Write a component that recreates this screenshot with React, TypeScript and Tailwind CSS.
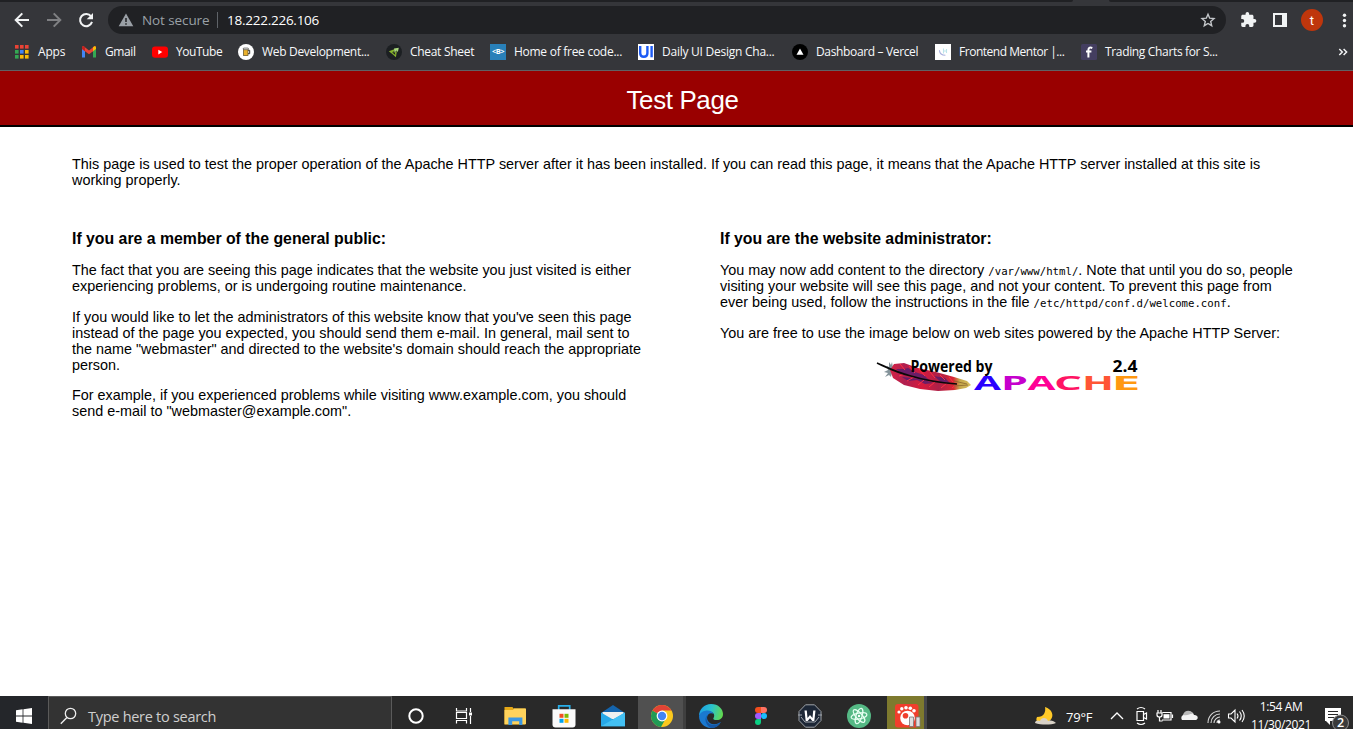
import React from "react";

type IconProps = { children: React.ReactNode; w?: number; h?: number; vb?: string; className?: string };
function Svg({ children, w = 16, h = 16, vb = "0 0 16 16", className = "" }: IconProps) {
  return (
    <svg width={w} height={h} viewBox={vb} fill="none" className={"block shrink-0 " + className}>
      {children}
    </svg>
  );
}

function AppsIcon() {
  const colors = ["#ea4335", "#ea4335", "#ea4335", "#34a853", "#4285f4", "#fbbc05", "#34a853", "#fbbc05", "#fbbc05"];
  return (
    <Svg>
      {colors.map((c, i) => (
        <rect key={i} x={2 + (i % 3) * 5} y={1 + Math.floor(i / 3) * 5} width="3.6" height="3.6" fill={c} />
      ))}
    </Svg>
  );
}

function GmailIcon() {
  return (
    <Svg>
      <path d="M1 4v9.500h3V7z" fill="#4285f4" />
      <path d="M12 7v6.500h3V4z" fill="#34a853" />
      <path d="M1 3.600C1 2.400 2.400 2 3.300 2.700L8 6.400v3.800L1 5z" fill="#ea4335" />
      <path d="M15 3.600c0-1.200-1.400-1.600-2.300-.9L8 6.400v3.800L12 7.200z" fill="#ea4335" />
      <path d="M12 3.300l.7-.6c.9-.7 2.300-.3 2.300.9V5l-3 2.300z" fill="#fbbc04" />
      <path d="M1 3.600c0-1.200 1.400-1.600 2.300-.9l.7.6v4L1 5z" fill="#c5221f" />
    </Svg>
  );
}

function YouTubeIcon() {
  return (
    <Svg>
      <rect x="0" y="2.4" width="16" height="11.300" rx="3" fill="#f00" />
      <path d="M6.300 5.800v4.600l4-2.300z" fill="#fff" />
    </Svg>
  );
}

function BeerIcon() {
  return (
    <Svg>
      <circle cx="8" cy="8" r="8" fill="#fff" />
      <path d="M10 6.300h1.700v3.400H10" stroke="#333" strokeWidth="1" />
      <rect x="5.500" y="4.800" width="4.500" height="6.700" fill="#eab02b" stroke="#5b4a20" strokeWidth="0.7" />
      <rect x="5.200" y="4" width="5.200" height="1.700" rx=".8" fill="#ddd" stroke="#444" strokeWidth=".6" />
    </Svg>
  );
}

function EmmetIcon() {
  return (
    <Svg>
      <circle cx="8" cy="8" r="8" fill="#1c1f22" />
      <path d="M2.800 7.200L9 5 7.800 7.500l-1.300.4 1.600 1 2.800-2-1 6.300-3-2.700z" fill="#86b32d" />
      <path d="M8 4.600l4.800-.9-1 4.500-1-1.600-2.300 2z" fill="#a9d77d" />
      <path d="M6 8.300l3 .8.300 2z" fill="#1c1f22" />
    </Svg>
  );
}

function BootstrapIcon() {
  return (
    <span className="flex h-4 w-4 shrink-0 items-center justify-center bg-[#2980b9] font-['Open_Sans',sans-serif] text-[7.5px] font-bold leading-none tracking-[-0.5px] text-white">
      &lt;B&gt;
    </span>
  );
}

function DailyUiIcon() {
  return (
    <Svg>
      <rect width="16" height="16" fill="#fff" />
      <path d="M2.200 2v7.200c0 4.700 7.200 4.700 7.200 0V2" stroke="#1d5bf5" strokeWidth="2.400" />
      <path d="M13.600 2v11.300" stroke="#1d5bf5" strokeWidth="2.400" />
    </Svg>
  );
}

function VercelIcon() {
  return (
    <Svg>
      <circle cx="8" cy="8" r="8" fill="#000" />
      <path d="M8 4.400l3.500 6.300h-7z" fill="#fff" />
    </Svg>
  );
}

function MentorIcon() {
  return (
    <Svg>
      <rect width="16" height="16" fill="#fff" />
      <path d="M4.400 6.200c.3 3.500 2 5 6 5" stroke="#a9b1de" strokeWidth="1.100" />
      <path d="M8.500 4.500v5M11.500 5v4M9 7h2.500" stroke="#bde5ea" strokeWidth="1.100" />
    </Svg>
  );
}

function ChartsIcon() {
  return (
    <Svg>
      <rect width="16" height="16" rx="1.500" fill="#443e60" />
      <path d="M11.300 4C8.500 2.900 7.400 3.900 7.400 6v7.500M5 7.400h5.400" stroke="#fff" strokeWidth="2" />
    </Svg>
  );
}

const bookmarks = [
  { label: "Apps", icon: <AppsIcon />, box: "w-[68px] gap-[9px] tracking-[-0.2px]" },
  { label: "Gmail", icon: <GmailIcon />, box: "w-[71px] gap-2 tracking-[-0.4px]" },
  { label: "YouTube", icon: <YouTubeIcon />, box: "w-[86px] gap-2 tracking-[-0.45px]" },
  { label: "Web Development...", icon: <BeerIcon />, box: "w-[148px] gap-2 tracking-[-0.31px]" },
  { label: "Cheat Sheet", icon: <EmmetIcon />, box: "w-[104px] gap-2 tracking-[-0.3px]" },
  { label: "Home of free code...", icon: <BootstrapIcon />, box: "w-[148px] gap-2 tracking-[-0.27px]" },
  { label: "Daily UI Design Cha...", icon: <DailyUiIcon />, box: "w-[154px] gap-2 tracking-[-0.25px]" },
  { label: "Dashboard – Vercel", icon: <VercelIcon />, box: "w-[143px] gap-2 tracking-[-0.35px]" },
  { label: "Frontend Mentor |...", icon: <MentorIcon />, box: "w-[146px] gap-2 tracking-[-0.48px]" },
  { label: "Trading Charts for S...", icon: <ChartsIcon />, box: "w-[150px] gap-2 tracking-[-0.34px]" },
];

function BrowserChrome() {
  return (
    <header className="flex h-[71px] shrink-0 flex-col border-b border-[#606164] bg-[#35363a] font-['Open_Sans',sans-serif]">
      <div className="flex h-[2px] justify-between">
        <div className="w-[1073px] rounded-br-sm bg-[#202124]" />
        <div className="w-[244px] rounded-bl-sm bg-[#202124]" />
      </div>
      <div className="flex h-9 items-center">
        <Svg w={108} h={36} vb="0 0 108 36">
          <path d="M29 18H16M22.300 11.400L15.700 18l6.600 6.600" stroke="#f1f3f4" strokeWidth="2" />
          <path d="M47 18h13M53.700 11.400l6.600 6.600-6.600 6.600" stroke="#7f8083" strokeWidth="2" />
          <path d="M91.100 14.400a6.100 6.100 0 1 0 .9 5.500" stroke="#f1f3f4" strokeWidth="2" />
          <path d="M93 11v6.300h-6.300z" fill="#f1f3f4" />
        </Svg>
        <div className="flex h-7 w-[1118px] shrink-0 items-center rounded-full bg-[#202124] pl-[10px] pr-[10px]">
          <Svg>
            <path d="M8 1.500L15.300 14.300H.7z" fill="#9aa0a6" />
            <path d="M8 6v4M8 11.200v1.600" stroke="#202124" strokeWidth="1.500" />
          </Svg>
          <span className="ml-2 w-[75px] whitespace-nowrap text-[13.5px] tracking-[-0.1px] text-[#9aa0a6]">Not secure</span>
          <span className="h-4 w-px bg-[#5f6368]" />
          <span className="ml-[9px] flex-1 whitespace-nowrap text-[13.5px] tracking-[-0.25px] text-white">18.222.226.106</span>
          <Svg>
            <path d="M8 2.200l1.700 4 4.300.4-3.300 2.900 1 4.200L8 11.500l-3.700 2.200 1-4.200L2 6.600l4.300-.4z" stroke="#c4c7ca" strokeWidth="1.400" />
          </Svg>
        </div>
        <Svg w={127} h={36} vb="0 0 127 36">
          <g transform="translate(13.800 9.200) scale(.72)">
            <path d="M20.500 11H19V7c0-1.100-.9-2-2-2h-4V3.500a2.500 2.500 0 0 0-5 0V5H4c-1.100 0-2 .9-2 2v3.800h1.500a2.700 2.700 0 0 1 0 5.400H2V20c0 1.100.9 2 2 2h3.800v-1.500a2.700 2.700 0 0 1 5.400 0V22H17c1.100 0 2-.9 2-2v-4h1.500a2.500 2.500 0 0 0 0-5z" fill="#f1f3f4" />
          </g>
          <path d="M47 11h14v14H47zM49 13v10h7V13z" fill="#f1f3f4" fillRule="evenodd" />
          <circle cx="86" cy="18" r="11" fill="#bf360c" />
          <circle cx="118.500" cy="13.200" r="1.700" fill="#f1f3f4" />
          <circle cx="118.500" cy="18.500" r="1.700" fill="#f1f3f4" />
          <circle cx="118.500" cy="23.800" r="1.700" fill="#f1f3f4" />
          <text x="83.800" y="22.500" fill="#fff" fontSize="13" fontFamily="Roboto">t</text>
        </Svg>
      </div>
      <div className="flex h-7 items-center pl-[13px] pr-[5px] text-[12px] text-[#f8f9fa]">
        {bookmarks.map((b) => (
          <div key={b.label} className={"flex shrink-0 items-center whitespace-nowrap " + b.box}>
            {b.icon}
            <span>{b.label}</span>
          </div>
        ))}
        <Svg w={10} h={10} vb="0 0 10 10" className="ml-auto">
          <path d="M1.300 2l3 3-3 3M5.600 2l3 3-3 3" stroke="#f1f3f4" strokeWidth="1.500" />
        </Svg>
      </div>
    </header>
  );
}

function ApacheBadge() {
  return (
    <svg width="264" height="44" viewBox="0 0 264 44" className="mx-auto block overflow-visible" role="img">
      <defs>
        <linearGradient id="feather" x1="0" x2="1">
          <stop offset="0" stopColor="#d62243" />
          <stop offset=".18" stopColor="#b02050" />
          <stop offset=".4" stopColor="#d51b3e" />
          <stop offset=".6" stopColor="#ad2048" />
          <stop offset=".78" stopColor="#d92635" />
          <stop offset=".86" stopColor="#c4a64a" />
          <stop offset="1" stopColor="#d9c05e" />
        </linearGradient>
      </defs>
      <path d="M11 8l2 1V4l2 3 1-3 1 6-2 9-2-2-4 2 3-4-4-1 4-2z" fill="#84939a" />
      <path d="M18 6l10-1 14 5 18 4 18 5 13 4 4 4-5 3-11 2-17 1-18-2-16-4-11-7-3-8z" fill="url(#feather)" />
      <path d="M20 11l5 4 10 2 5 3 14 3-6-6-9-3-7-4-4 1zM26 19l6 4 9-1 8 4 8-1-11-4zM58 18l7 6 9 1-5-5z" fill="#5b1d6d" opacity=".85" />
      <path d="M24 6l5 6M33 8l6 7M43 11l6 7M54 14l5 6M64 17l5 5M73 19l4 5M23 18l6-2M31 23l7-4M42 27l6-5M53 29l6-5M65 30l6-5M76 30l5-4" stroke="#ff3044" strokeWidth="1" />
      <path d="M78 23l13 3M78 28l14-1" stroke="#8a642b" strokeWidth=".8" />
      <path d="M1 5c9 4 18 9 34 13 16 5 33 7 46 8" stroke="#080808" strokeWidth="1.700" fill="none" />
      <g fontFamily="'Open Sans', sans-serif" fontSize="15.500" fontWeight="700" fill="#000">
        <text x="34.500" y="14" textLength="82" lengthAdjust="spacingAndGlyphs">Powered by</text>
        <text x="236.500" y="14" textLength="25" lengthAdjust="spacingAndGlyphs">2.4</text>
      </g>
      <g fontFamily="'Open Sans', sans-serif" fontSize="19" fontWeight="700">
        <text x="98" y="32.300" textLength="27" lengthAdjust="spacingAndGlyphs" fill="#2900ff">A</text>
        <text x="125" y="32.300" textLength="27" lengthAdjust="spacingAndGlyphs" fill="#c500cd">P</text>
        <text x="151.500" y="32.300" textLength="28" lengthAdjust="spacingAndGlyphs" fill="#ff0095">A</text>
        <text x="178" y="32.300" textLength="28" lengthAdjust="spacingAndGlyphs" fill="#ff1464">C</text>
        <text x="206" y="32.300" textLength="32" lengthAdjust="spacingAndGlyphs" fill="#ff5535">H</text>
        <text x="235.500" y="32.300" textLength="29" lengthAdjust="spacingAndGlyphs" fill="#ff9812">E</text>
      </g>
    </svg>
  );
}

function Code({ children }: { children: React.ReactNode }) {
  return <code className="font-['DejaVu_Sans_Mono',monospace] text-[10.7px] leading-none">{children}</code>;
}

function TestPage() {
  return (
    <main className="flex flex-1 flex-col bg-white font-['Liberation_Sans',sans-serif] text-[14.4px] leading-[16px] text-black">
      <h1 className="flex h-14 items-center justify-center border-b-2 border-black bg-[#990000] pl-3 pt-1 text-[25.92px] leading-[30px] tracking-[-0.35px] text-white">
        Test Page
      </h1>
      <p className="ml-[72px] mt-[29px] w-[1209px]">
        This page is used to test the proper operation of the Apache HTTP server after it has been installed. If you can read
        this page, it means that the Apache HTTP server installed at this site is working properly.
      </p>
      <div className="ml-[72px] mt-[42px] flex gap-[72px]">
        <section className="flex w-[576px] flex-col gap-[14.4px]">
          <h2 className="h-[18px] text-[15.84px] font-bold leading-[18px]">If you are a member of the general public:</h2>
          <p>
            The fact that you are seeing this page indicates that the website you just visited is either experiencing
            problems, or is undergoing routine maintenance.
          </p>
          <p>
            If you would like to let the administrators of this website know that you've seen this page instead of the page
            you expected, you should send them e-mail. In general, mail sent to the name "webmaster" and directed to the
            website's domain should reach the appropriate person.
          </p>
          <p>
            For example, if you experienced problems while visiting www.example.com, you should send e-mail to
            "webmaster@example.com".
          </p>
        </section>
        <section className="flex w-[576px] flex-col gap-[14.4px]">
          <h2 className="h-[18px] text-[15.84px] font-bold leading-[18px]">If you are the website administrator:</h2>
          <p>
            You may now add content to the directory <Code>/var/www/html/</Code>. Note that until you do so, people visiting
            your website will see this page, and not your content. To prevent this page from ever being used, follow the
            instructions in the file <Code>/etc/httpd/conf.d/welcome.conf</Code>.
          </p>
          <p>You are free to use the image below on web sites powered by the Apache HTTP Server:</p>
          <div className="pt-[3px]">
            <ApacheBadge />
          </div>
        </section>
      </div>
    </main>
  );
}

function Slot({ children, className = "w-[49px] justify-center" }: { children: React.ReactNode; className?: string }) {
  return <div className={"flex h-[33px] shrink-0 pt-2 " + className}>{children}</div>;
}

function Taskbar() {
  return (
    <footer className="flex h-[33px] shrink-0 overflow-hidden bg-[#292929] font-['Open_Sans',sans-serif] text-white">
      <div className="flex w-12 shrink-0 justify-center bg-[#24262a] pt-3">
        <Svg>
          <path d="M0 2.200L6.600 1.300v6.300H0zM7.400 1.200L16 0v7.600H7.400zM0 8.400h6.600v6.300L0 13.800zM7.400 8.400H16V16l-8.600-1.200z" fill="#fff" />
        </Svg>
      </div>
      <div className="flex w-[344px] shrink-0 gap-[11px] border border-b-0 border-[#5a5a5a] bg-[#333333] pl-[11px] pt-[10px]">
        <Svg w={17} h={18} vb="0 0 17 18">
          <circle cx="10.500" cy="6.500" r="5.200" stroke="#ededed" strokeWidth="1.300" />
          <path d="M6.900 10.400L.8 16.800" stroke="#ededed" strokeWidth="1.400" />
        </Svg>
        <span className="whitespace-nowrap text-[14.5px] leading-[20px] tracking-[-0.28px] text-[#cfcfcf]">Type here to search</span>
      </div>
      <Slot className="w-12 justify-center">
        <Svg w={24} h={24} vb="0 0 24 24"><circle cx="12" cy="12" r="6.700" stroke="#fff" strokeWidth="2" /></Svg>
      </Slot>
      <Slot className="w-[50px] justify-center pr-[2px]">
        <Svg w={24} h={24} vb="0 0 24 24">
          <path d="M4.500 4v3h10V4M4.500 19.500v-3h10v3M4.500 8.500h10v6h-10zM18.500 4v4M18.500 12v8" stroke="#fff" strokeWidth="1.200" />
          <rect x="17" y="8.500" width="3" height="3" fill="#fff" />
        </Svg>
      </Slot>
      <Slot>
        <Svg w={24} h={24} vb="0 0 24 24">
          <path d="M1.500 3h8l1 1.500H22v16H1.500z" fill="#e6a817" />
          <path d="M1.500 6h8.500l1-1.500h12v15.800H1.500z" fill="#ffd35c" />
          <path d="M5.400 21v-7.500h14V21h-3.200v-3.800H9.200V21z" fill="#3c98e2" />
        </Svg>
      </Slot>
      <Slot>
        <Svg w={24} h={24} vb="0 0 24 24">
          <path d="M6.700 6V1.800h11V6" stroke="#28afea" strokeWidth="1.700" />
          <path d="M.5 5.300h23v15.200c0 2-1 3-3 3h-17c-2 0-3-1-3-3z" fill="#fafafa" />
          <path d="M7.500 9.800h4v4h-4z" fill="#f25022" /><path d="M12.500 9.800h4v4h-4z" fill="#7fba00" />
          <path d="M7.500 14.800h4v4h-4z" fill="#00a4ef" /><path d="M12.500 14.800h4v4h-4z" fill="#ffb900" />
        </Svg>
      </Slot>
      <Slot>
        <Svg w={24} h={24} vb="0 0 24 24">
          <path d="M0 9L12 1l12 8v4H0z" fill="#1464ac" />
          <path d="M1.500 8h21v7H1.500z" fill="#eef0f0" />
          <path d="M0 8.500l12 7 12-7v13.800H0z" fill="#27a8e8" />
          <path d="M0 22.300l24-13.800v13.800z" fill="#43c0f3" />
        </Svg>
      </Slot>
      <Slot className="ml-px w-[45px] justify-center bg-[#505050] pl-[3px]">
        <Svg w={24} h={24} vb="0 0 24 24">
          <circle cx="12" cy="12" r="11" fill="#fbc91d" />
          <path d="M12 12L2.500 6.500A11 11 0 0 0 11 23l5-9z" fill="#219a56" />
          <path d="M12 12L2.500 6.500A11 11 0 0 1 21.500 6.500H12z" fill="#e14336" />
          <circle cx="12" cy="12" r="5.400" fill="#fff" /><circle cx="12" cy="12" r="4.200" fill="#4285f4" />
        </Svg>
      </Slot>
      <Slot className="w-[53px] justify-center border-l-[3px] border-[#3f3f3f]">
        <Svg w={24} h={24} vb="0 0 24 24">
          <defs>
            <linearGradient id="edge" x1="0" y1="0.300" x2="1" y2=".5"><stop stopColor="#1b9de6" /><stop offset=".5" stopColor="#2bc3cc" /><stop offset="1" stopColor="#62d94f" /></linearGradient>
          </defs>
          <path d="M0 12C0 5.400 5.400 0 12 0c7.500 0 12 5 12 10 0 4-3 6-6 6s-4.500-1-3.200-2.600c1.200-2.400 0-6-5.300-6C4.500 7.400 1 10 0 12z" fill="url(#edge)" />
          <path d="M0 12c1-3.500 4.500-5.600 8.500-5.600 3 0 5.500 1.500 6.300 3.600-1.500-1-3.800-1.300-5.300.2-3.500 3.800-.3 9.800 5.500 10 3 .1 5-1 6.800-2.200C20.500 21 17 24 12 24 5.400 24 0 18.600 0 12z" fill="#1a79cf" />
          <path d="M9.500 10.200c-4 3-1.800 10.800 5 10.500 3 .2 5.300-1 7.300-2.700C20.500 21 17 24 12 24 6 21 4.500 13 9.500 10.200z" fill="#1557a5" />
        </Svg>
      </Slot>
      <Slot>
        <Svg w={24} h={24} vb="0 0 24 24">
          <path d="M6 6a3 3 0 0 1 3-3h3v6H9a3 3 0 0 1-3-3z" fill="#f24e1e" /><path d="M12 3h3a3 3 0 0 1 0 6h-3z" fill="#ff7262" />
          <path d="M6 12a3 3 0 0 1 3-3h3v6H9a3 3 0 0 1-3-3z" fill="#a259ff" /><circle cx="15" cy="12" r="3" fill="#1abcfe" />
          <path d="M9 15h3v3a3 3 0 1 1-3-3z" fill="#0acf83" />
        </Svg>
      </Slot>
      <Slot>
        <Svg w={24} h={24} vb="0 0 24 24">
          <path d="M7.500.8h9L23 7.500v9l-6.500 6.700h-9L1 16.500v-9z" fill="#1d2736" stroke="#9fa3a8" strokeWidth="1" />
          <path d="M0 11h4M20 11h4M3 13l4 5h10l4-5" stroke="#a4a9b0" strokeWidth="1" />
          <path d="M6.500 6.500h2.300l.7 7.500 2.500-3 2.500 3 .7-7.500h2.300L16.300 17h-2L12 14.300 9.700 17h-2z" fill="#fff" />
        </Svg>
      </Slot>
      <Slot>
        <Svg w={24} h={24} vb="0 0 24 24">
          <circle cx="12" cy="12" r="12" fill="#55b985" />
          <g stroke="#e5fff1" strokeWidth="1.200"><ellipse cx="12" cy="12" rx="8" ry="3" transform="rotate(-12 12 12)" /><ellipse cx="12" cy="12" rx="8" ry="3" transform="rotate(48 12 12)" /><ellipse cx="12" cy="12" rx="8" ry="3" transform="rotate(108 12 12)" /></g>
          <circle cx="12" cy="12" r="1.200" fill="#fff" />
        </Svg>
      </Slot>
      <Slot className="ml-[4px] w-[37px] justify-start bg-[#7e7a2e] pl-2">
        <Svg w={26} h={24} vb="0 0 26 24">
          <rect width="23.500" height="23.500" rx="3" fill="#f03e2c" />
          <circle cx="12.500" cy="14" r="7.300" fill="#fff" /><circle cx="10.500" cy="11.800" r="2.800" fill="#f03e2c" />
          <circle cx="4" cy="8" r="1.600" fill="#fff" /><circle cx="6.800" cy="4.800" r="1.700" fill="#fff" /><circle cx="11" cy="3.700" r="1.800" fill="#fff" /><circle cx="15.300" cy="4.300" r="1.800" fill="#fff" /><circle cx="19" cy="6.800" r="1.800" fill="#fff" />
          <path d="M14.500 13h4v9.500h-4zM21 13h4v9.500h-4z" fill="#dedede" stroke="#777" strokeWidth=".8" />
        </Svg>
      </Slot>
      <div className="h-full w-[3px] bg-[#45464a]" />
      <div className="ml-auto flex shrink-0">
        <Svg w={24} h={24} vb="0 0 24 24" className="mt-[9px]">
          <path d="M11 2c7 2 11 10 3 15H4c-2-1-2-3-1-5 7 0 9-5 8-10z" fill="#ffc928" />
          <path d="M1 18c0-3 4-3 5-2 1-4 7-4 8 0 3-1 6 0 8 2-5 2-15 2-21 0z" fill="#d8d1c6" />
        </Svg>
        <span className="ml-2 mt-[11px] w-[43px] whitespace-nowrap text-[13px] leading-5 tracking-[-0.2px]">79°F</span>
        <Svg w={140} h={33} vb="0 0 140 33">
          <path d="M2 23l6-6 6 6" stroke="#fff" strokeWidth="1.300" />
          <path d="M28 15.500h6.500v9H28zM34.500 18.500l3-1.500v6l-3-1.500M28 13q4-3 8 0M28 27q4 3 8 0" stroke="#fff" strokeWidth="1.200" />
          <path d="M53.500 16.500H62v7.500h-9M63.500 18.500V22M49 14v2.500M52 14v2.500M48 17h5v2q0 2-2.500 2T48 19zM50.500 21v4h3" stroke="#fff" strokeWidth="1.200" /><path d="M54.500 18.200H60.500v4.300h-6z" fill="#fff" />
          <path d="M73 24c-2-3 1-6 3-5 2-5 8-4 9 0 4-.500 5 4 2 5z" fill="#f3f3f3" /><path d="M74 19c1-5 8-6 10-1-3-1-4 2-10 1z" fill="#b8b8b8" />
          <path d="M99 27c0-7 5-12 12-12M102 27c0-5 4-9 9-9M105 27c0-3 3-6 6-6M108 27c0-2 1-3 3-3" stroke="#d8d8d8" strokeWidth="1.100" /><circle cx="110" cy="26" r="1.500" fill="#fff" />
          <path d="M119.500 18h2.500l4-4v12l-4-4h-2.500zM128 17.500q2 2.500 0 5M130.500 15.500q3.500 4.500 0 9M133 14q4.500 6 0 12" stroke="#fff" strokeWidth="1.100" />
        </Svg>
        <div className="ml-[2px] flex w-[60px] flex-col items-center whitespace-nowrap pt-[2px] text-[12px] leading-[18px] tracking-[-0.36px]">
          <span>1:54 AM</span><span>11/30/2021</span>
        </div>
        <Svg w={42} h={33} vb="0 0 42 33">
          <path d="M14 12h16v13H19v4l-4-4h-1z" fill="#fff" /><path d="M17 15.500h10M17 18.500h10M17 21.500h6" stroke="#292929" />
          <circle cx="29.500" cy="27" r="8" fill="#3a3a3a" stroke="#909090" />
          <text x="26" y="31" fontSize="12.500" fontWeight="600" fontFamily="Open Sans" fill="#fff">2</text>
        </Svg>
      </div>
    </footer>
  );
}

export default function App() {
  return (
    <div className="flex h-[729px] w-[1353px] flex-col overflow-hidden">
      <BrowserChrome />
      <TestPage />
      <Taskbar />
    </div>
  );
}
